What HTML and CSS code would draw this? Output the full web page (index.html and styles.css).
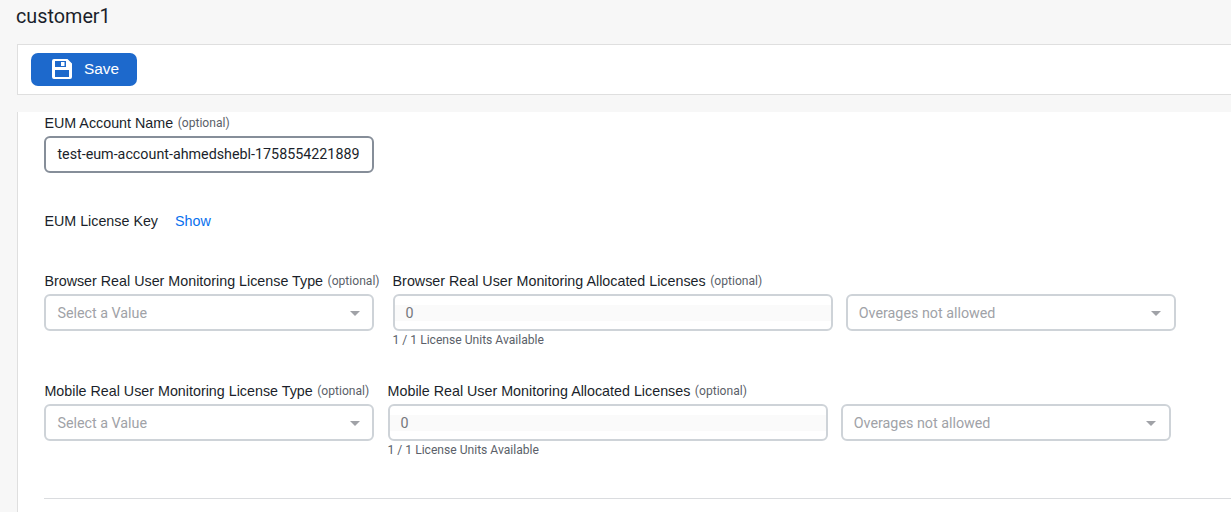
FILE: index.html
```html
<!DOCTYPE html>
<html lang="en">
<head>
<meta charset="utf-8">
<title>customer1</title>
<link rel="stylesheet" href="styles.css">
</head>
<body>
<h1 class="title">customer1</h1>
<div class="toolbar">
  <button class="save" type="button">
    <svg class="save-icon" viewBox="0 0 20 20" width="20" height="20"><path fill="#fff" fill-rule="evenodd" d="M2 0H15.500L20 4.500V18a2 2 0 0 1-2 2H2a2 2 0 0 1-2-2V2a2 2 0 0 1 2-2ZM3 2V8H14V2ZM3 11V18H17V11Z"/><path fill="#fff" d="M9 3h3.500v4H9z"/></svg>
    <span>Save</span>
  </button>
</div>
<main class="panel">
  <div class="field account">
    <label class="label"><span>EUM Account Name</span><small>(optional)</small></label>
    <div class="box active">test-eum-account-ahmedshebl-1758554221889</div>
  </div>
  <div class="key"><span>EUM License Key</span><a class="show">Show</a></div>
  <div class="row browser">
    <div class="field type">
      <label class="label"><span>Browser Real User Monitoring License Type</span><small>(optional)</small></label>
      <div class="box select"><span>Select a Value</span><i class="caret"></i></div>
    </div>
    <div class="field count">
      <label class="label"><span>Browser Real User Monitoring Allocated Licenses</span><small>(optional)</small></label>
      <div class="box number"><span class="value">0</span></div>
      <div class="hint">1 / 1 License Units Available</div>
    </div>
    <div class="field overage">
      <div class="box select"><span>Overages not allowed</span><i class="caret"></i></div>
    </div>
  </div>
  <div class="row mobile">
    <div class="field type">
      <label class="label"><span>Mobile Real User Monitoring License Type</span><small>(optional)</small></label>
      <div class="box select"><span>Select a Value</span><i class="caret"></i></div>
    </div>
    <div class="field count">
      <label class="label"><span>Mobile Real User Monitoring Allocated Licenses</span><small>(optional)</small></label>
      <div class="box number"><span class="value">0</span></div>
      <div class="hint">1 / 1 License Units Available</div>
    </div>
    <div class="field overage">
      <div class="box select"><span>Overages not allowed</span><i class="caret"></i></div>
    </div>
  </div>
  <hr class="divider">
</main>
</body>
</html>
```
FILE: styles.css
```css
* { box-sizing: border-box; }
body {
  margin: 0;
  height: 512px;
  overflow: hidden;
  display: flex;
  flex-direction: column;
  background: #f7f7f7;
  color: #1b1f2b;
  font-family: Roboto, sans-serif;
}
.title {
  margin: 0;
  height: 44px;
  padding: 5px 0 0 16px;
  font-size: 19.8px;
  line-height: 24px;
  font-weight: 400;
}
.toolbar {
  height: 51px;
  flex: none;
  margin: 0 0 17px 17px;
  padding: 8px 13px;
  border: 1px solid #dfdfdf;
  border-right: 0;
  background: #fff;
}
.save {
  width: 106px;
  height: 33px;
  padding: 0 0 1px 21px;
  display: flex;
  align-items: center;
  gap: 12px;
  border: 0;
  border-radius: 7px;
  background: #1d69cc;
  color: #fff;
  font: 15.4px "Liberation Sans", sans-serif;
}
.save-icon { flex: none; }
.panel {
  flex: 1;
  margin-left: 17px;
  padding: 2px 0 0 26.400px;
  border-left: 1px solid #dfdfdf;
  background: #fff;
}
.field { width: 330px; }
.label {
  height: 18px;
  margin-bottom: 4px;
  display: flex;
  align-items: flex-start;
  gap: 4.500px;
  white-space: nowrap;
  font: 14.3px/18px "Liberation Sans", sans-serif;
}
.label small { font: 12.1px/18px Roboto, sans-serif; color: #5b5f69; }
.box {
  height: 37px;
  padding: 0 12.500px 0 11px;
  display: flex;
  align-items: center;
  border: 2px solid #ced3d8;
  border-radius: 6px;
  font-size: 14.3px;
  line-height: 16px;
}
.active { border-color: #868e99; padding-bottom: 1px; }
.select { justify-content: space-between; color: #a0a2a7; }
.caret {
  margin-top: 1px;
  border: 5.500px solid transparent;
  border-top-color: #a0a2a7;
  border-bottom: 0;
}
.key {
  margin-top: 39px;
  height: 18px;
  display: flex;
  gap: 17px;
  font: 14.3px/18px "Liberation Sans", sans-serif;
}
.show { color: #0870ee; }
.row { display: flex; gap: 13.200px; align-items: flex-start; height: 110px; }
.browser { margin-top: 42px; }
.browser .type { width: 335px; }
.browser .type .box { width: 330px; }
.count { width: 440px; }
.number { padding: 0; color: #74777c; }
.value { flex: 1; padding-left: 11px; background: #fafafa; }
.hint { margin-top: 1px; font-size: 12.1px; line-height: 16px; color: #5b5f69; }
.overage { padding-top: 22px; }
.divider { margin: 6px 0 0; border: 0; height: 1px; background: #dadcdf; }
```
